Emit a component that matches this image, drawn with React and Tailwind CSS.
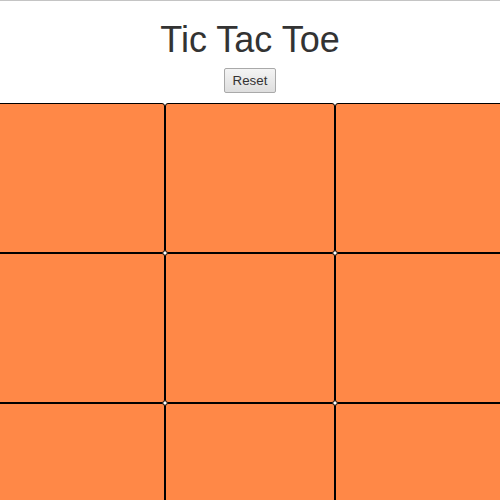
export default function App() {
  const cells = Array.from({ length: 9 });
  return (
    <div className="min-h-[500px] w-full overflow-hidden border-t border-[#c4c4c4] bg-white font-['Liberation_Sans',Arial,sans-serif]">
      <div className="flex flex-col items-center pt-[21px]">
        <h1 className="text-[36px] leading-[36px] text-[#333333]">Tic Tac Toe</h1>
        <button className="mt-[10px] h-[25px] w-[52px] rounded-[2px] border border-[#a9a9a9] bg-gradient-to-b from-[#f4f4f4] to-[#dedede] text-[13.33px] text-[#333333]">
          Reset
        </button>
      </div>
      <div className="ml-[-5px] mt-[10px] grid grid-cols-[170px_170px_170px]">
        {cells.map((_, i) => (
          <div
            key={i}
            className="h-[150px] rounded-[3px] border border-black bg-[#ff8847]"
          />
        ))}
      </div>
    </div>
  );
}
